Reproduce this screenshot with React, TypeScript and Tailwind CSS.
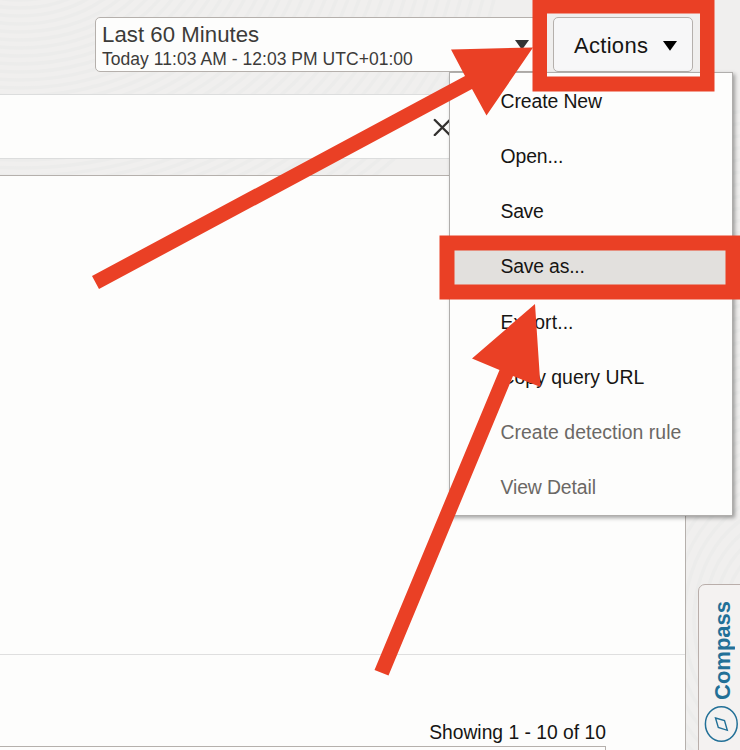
import React from "react";

const items = [
  { label: "Create New", tracking: "tracking-[-0.1px]" },
  { label: "Open...", tracking: "tracking-[-0.1px]" },
  { label: "Save", tracking: "tracking-[-0.3px]" },
  { label: "Save as...", tracking: "tracking-[-0.2px]", active: true },
  { label: "Export...", tracking: "tracking-[0.1px]" },
  { label: "Copy query URL", tracking: "tracking-[0.03px]" },
  { label: "Create detection rule", tracking: "tracking-[0.04px]", disabled: true },
  { label: "View Detail", tracking: "tracking-[-0.12px]", disabled: true },
];

const ripples = Array.from({ length: 42 }, (_, i) => i);

function Texture() {
  return (
    <svg className="absolute inset-0" width="740" height="750" fill="none" stroke="#ececeb" strokeWidth="3.5">
      {ripples.map((i) => (
        <ellipse key={`a${i}`} cx="20" cy="-60" rx={30 + i * 11} ry={20 + i * 8} />
      ))}
      {ripples.map((i) => (
        <ellipse key={`b${i}`} cx="790" cy="620" rx={16 + i * 10} ry={20 + i * 12} />
      ))}
    </svg>
  );
}

function Caret({ className }: { className: string }) {
  return (
    <svg className={className} width="14" height="10" viewBox="0 0 14 10">
      <path d="M0 0h14L7 9.8z" fill="currentColor" />
    </svg>
  );
}

function ActionsMenu() {
  return (
    <ul className="absolute left-[449px] top-[72px] h-[444px] w-[284px] border border-[#b0aeac] bg-[#fdfdfc] pt-[1px] shadow-[2px_2px_4px_rgba(0,0,0,0.35)]">
      {items.map((it) => (
        <li
          key={it.label}
          className={`flex h-[55.15px] items-center pl-[50.5px] text-[19.4px] ${it.tracking} ${it.active ? "bg-[#e2e0dd]" : ""} ${it.disabled ? "text-[#6b6865]" : "text-[#161513]"}`}
        >
          {it.label}
        </li>
      ))}
    </ul>
  );
}

function Annotations() {
  return (
    <svg className="absolute inset-0" width="740" height="750" fill="#ea4025" fillRule="evenodd">
      <path d="M532.5-2H714.5V91.5H532.5zM547 13.5V76.5H700V13.5z" />
      <path d="M439.5 235.5H742V299.5H439.5zM454.5 250.5V284.5H725.5V250.5z" />
      <path d="M92 276L465 76L451 49.5L533 47.5L486.5 115.5L472 89L99 289z" />
      <path d="M374.5 670L499.5 370L472 358.5L535 304L540.5 387L513 376L388.5 675.5z" />
    </svg>
  );
}

export default function App() {
  return (
    <div className="relative h-[750px] w-[740px] overflow-hidden bg-[#f0efee] font-['Liberation_Sans',Arial,sans-serif]">
      <Texture />
      <div className="relative flex h-full flex-col">
        <header className="flex h-[94px] shrink-0 items-start pl-[95px] pt-[17px]">
          <div className="flex h-[55px] w-[446px] items-center justify-between rounded-[5px] border border-[#b5b0ac] bg-[#fdfdfc] pl-[6px] pr-[11px] text-[#3c3b39]">
            <div className="whitespace-nowrap pt-[2px]">
              <div className="text-[22.2px] leading-[27px] tracking-[0.04px]">Last 60 Minutes</div>
              <div className="text-[17.5px] leading-[22px] tracking-[0.04px]">Today 11:03 AM - 12:03 PM UTC+01:00</div>
            </div>
            <Caret className="text-[#333]" />
          </div>
          <button className="ml-[12px] flex h-[55px] w-[140px] items-center rounded-[5px] border border-[#b5b0ac] bg-[#f7f7f8] pl-[20px] pt-[2px] text-[22px] text-[#161513]">
            <span className="w-[89px] text-left tracking-[0.3px]">Actions</span>
            <Caret className="text-black" />
          </button>
        </header>
        <div className="flex h-[65px] w-[686px] shrink-0 items-center border-y border-[#dcdddd] bg-[#fdfdfc] pl-[433px]">
          <svg width="18" height="18" viewBox="0 0 18 18" stroke="#33312f" strokeWidth="2.4" strokeLinecap="round">
            <path d="M1.8 2l15 15M16.8 2l-15 15" />
          </svg>
        </div>
        <main className="mt-[16px] flex w-[686px] grow flex-col border-r border-t border-[#b5b0ac] bg-[#fdfdfc]">
          <div className="h-[479px] shrink-0 border-b border-[#dfdfdf]" />
          <div className="flex h-[91px] w-[606px] shrink-0 items-end justify-end text-[19.3px] leading-[27px] text-[#161513]">
            Showing 1 - 10 of 10
          </div>
          <div className="h-[4px] w-[606px] border-r border-t border-[#b5b0ac]" />
        </main>
      </div>
      <aside className="absolute left-[698px] top-[584px] flex h-[172px] w-[50px] flex-col items-start rounded-tl-[7px] border border-[#b9aeaa] bg-[#f4f2f1] pl-[5px] pt-[16px] text-[#227097]">
        <span className="ml-[2px] h-[104px] w-[34px] rotate-180 text-right text-[22px] font-bold leading-[34px] [writing-mode:vertical-rl]">Compass</span>
        <svg width="34" height="38" viewBox="704 705 34 38" fill="none" stroke="#227097">
          <ellipse cx="721.3" cy="724" rx="15.9" ry="17.2" strokeWidth="1.5" />
          <path d="M715.5 718l9 2.5 2.8 9.8-9-2.8z" strokeWidth="1.4" />
        </svg>
      </aside>
      <ActionsMenu />
      <Annotations />
    </div>
  );
}
